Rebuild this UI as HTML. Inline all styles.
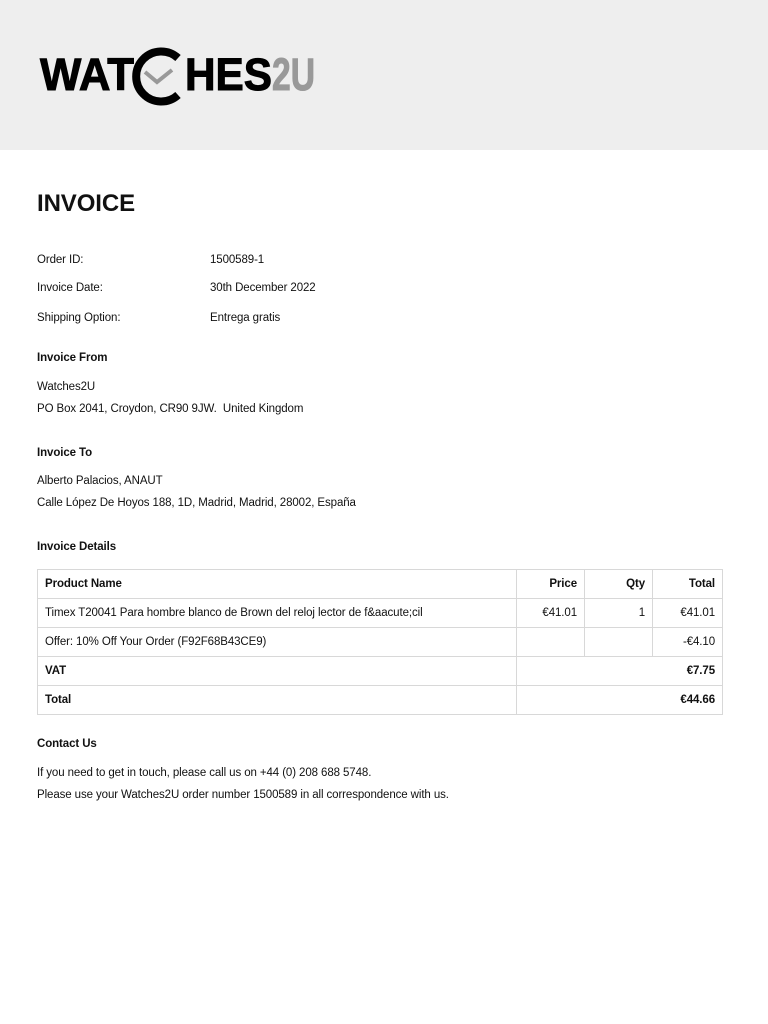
<!DOCTYPE html>
<html><head><meta charset="utf-8"><style>
*{margin:0;padding:0;box-sizing:border-box}
body{width:768px;height:1024px;background:#fff;font-family:"Liberation Sans",Arial,sans-serif;color:#111;position:relative;overflow:hidden;font-size:11.5px}
.hdr{position:absolute;left:0;top:0;width:768px;height:150px;background:#eeeeee}
.t{position:absolute;white-space:nowrap;letter-spacing:-0.1px}
.b{font-weight:bold}
table{position:absolute;left:37px;top:569px;width:686px;border-collapse:collapse}
td{border:1px solid #d8d8d8;height:29px;padding:0 7px;font-size:11.5px;letter-spacing:-0.1px}
.r{text-align:right}
</style></head><body>
<div class="hdr">
<svg width="320" height="70" style="position:absolute;left:38px;top:42px" viewBox="0 0 320 70">
<text x="2" y="48" font-family="Liberation Sans" font-weight="bold" font-size="45" fill="#000" stroke="#000" stroke-width="1" textLength="94" lengthAdjust="spacingAndGlyphs">WAT</text>
<path d="M140 16 A25 25 0 1 0 140 53" fill="none" stroke="#000" stroke-width="8"/>
<path d="M107 30 L119 40 L134 28" fill="none" stroke="#999" stroke-width="4"/>
<text x="147" y="48" font-family="Liberation Sans" font-weight="bold" font-size="45" fill="#000" stroke="#000" stroke-width="1" textLength="87" lengthAdjust="spacingAndGlyphs">HES</text>
<text x="234" y="48" font-family="Liberation Sans" font-weight="bold" font-size="45" fill="#999" stroke="#999" stroke-width="1" textLength="43" lengthAdjust="spacingAndGlyphs">2U</text>
</svg>
</div>
<div class="t b" style="left:37px;top:190px;font-size:24px">INVOICE</div>
<div class="t" style="left:37px;top:254px">Order ID:</div><div class="t" style="left:210px;top:254px">1500589-1</div>
<div class="t" style="left:37px;top:282px">Invoice Date:</div><div class="t" style="left:210px;top:282px">30th December 2022</div>
<div class="t" style="left:37px;top:312px">Shipping Option:</div><div class="t" style="left:210px;top:312px">Entrega gratis</div>
<div class="t b" style="left:37px;top:352px">Invoice From</div>
<div class="t" style="left:37px;top:381px">Watches2U</div>
<div class="t" style="left:37px;top:403px">PO Box 2041, Croydon, CR90 9JW.&nbsp; United Kingdom</div>
<div class="t b" style="left:37px;top:447px">Invoice To</div>
<div class="t" style="left:37px;top:475px">Alberto Palacios, ANAUT</div>
<div class="t" style="left:37px;top:497px">Calle López De Hoyos 188, 1D, Madrid, Madrid, 28002, España</div>
<div class="t b" style="left:37px;top:541px">Invoice Details</div>
<table>
<tr><td class="b" style="width:479px">Product Name</td><td class="b r" style="width:68px">Price</td><td class="b r" style="width:68px">Qty</td><td class="b r">Total</td></tr>
<tr><td>Timex T20041 Para hombre blanco de Brown del reloj lector de f&amp;aacute;cil</td><td class="r">€41.01</td><td class="r">1</td><td class="r">€41.01</td></tr>
<tr><td>Offer: 10% Off Your Order (F92F68B43CE9)</td><td></td><td></td><td class="r">-€4.10</td></tr>
<tr><td class="b">VAT</td><td colspan="3" class="b r">€7.75</td></tr>
<tr><td class="b">Total</td><td colspan="3" class="b r">€44.66</td></tr>
</table>
<div class="t b" style="left:37px;top:738px">Contact Us</div>
<div class="t" style="left:37px;top:767px">If you need to get in touch, please call us on +44 (0) 208 688 5748.</div>
<div class="t" style="left:37px;top:789px">Please use your Watches2U order number 1500589 in all correspondence with us.</div>
</body></html>
